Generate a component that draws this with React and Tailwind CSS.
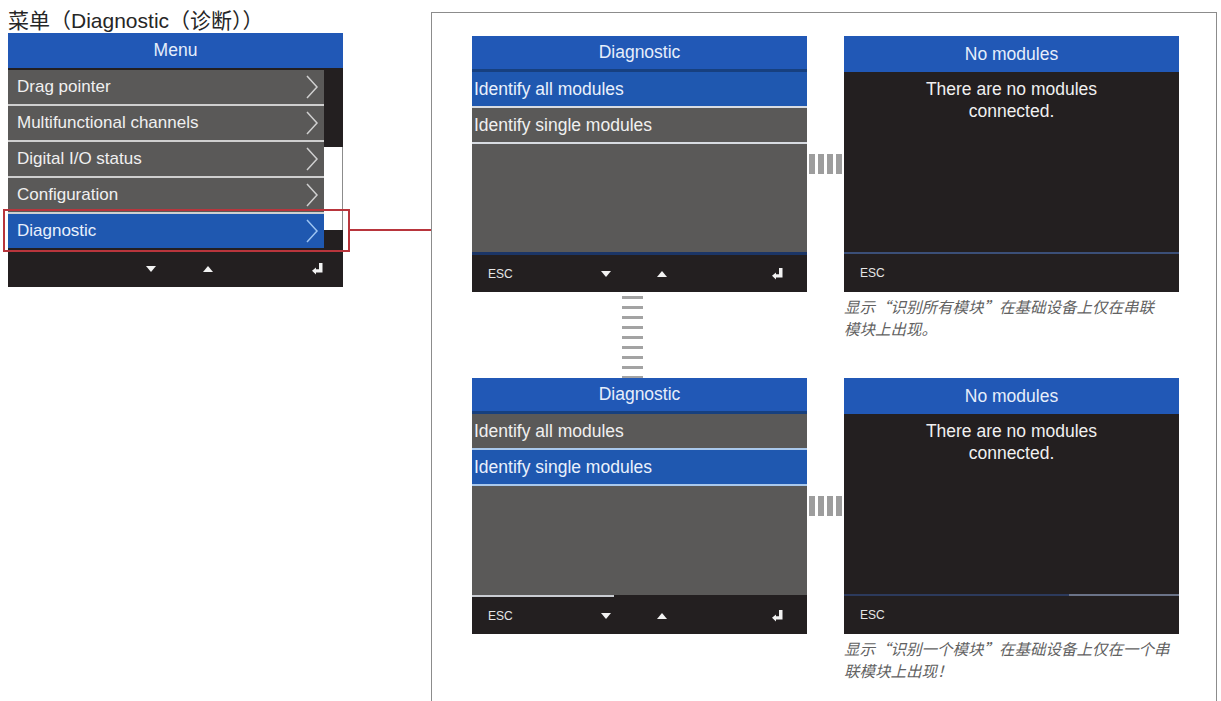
const FONT = "font-['Liberation_Sans','Noto_Sans_CJK_SC',sans-serif]";

const MENU_ITEMS = [
  'Drag pointer',
  'Multifunctional channels',
  'Digital I/O status',
  'Configuration',
  'Diagnostic',
];

const Tri = ({ up }) => (
  <svg width="10" height="6" viewBox="0 0 10 6" className="block">
    <polygon points={up ? '0,6 10,6 5,0' : '0,0 10,0 5,6'} fill="#f2f2f2" />
  </svg>
);

const Enter = () => (
  <svg width="11" height="12" viewBox="0 0 11 12" className="block">
    <path d="M7 0 H10.5 V9.5 H4 V11.5 L0 7.8 L4 4.5 V6.2 H7 Z" fill="#f2f2f2" />
  </svg>
);

const Chevron = ({ color = '#cfcfcf' }) => (
  <svg width="14" height="24" viewBox="0 0 14 24" className="block">
    <polyline points="2,1 12,12 2,23" fill="none" stroke={color} strokeWidth="1.5" />
  </svg>
);

const BottomBar = ({ esc, arrows = true, h = 'h-[37px]', lead = 'w-[113px]', gapUp = 'ml-[46px]', gapEnter = 'ml-[105px]' }) => (
  <div className={`flex items-center bg-[#231f20] pl-4 ${h}`}>
    <span className={`${lead} shrink-0 text-[12px] text-[#e6e6e6]`}>{esc ? 'ESC' : ''}</span>
    {arrows && (
      <>
        <Tri />
        <span className={gapUp}><Tri up /></span>
        <span className={gapEnter}><Enter /></span>
      </>
    )}
  </div>
);

const Header = ({ title, line }) => (
  <div
    className={`flex h-[36px] items-center justify-center bg-[#2158b6] text-[17.5px] text-[#e6eefb] ${
      line ? 'border-b-[3px] border-[#17407f]' : ''
    }`}
  >
    {title}
  </div>
);

const MainMenu = () => (
  <div className="relative w-[335px]">
    <div className="flex h-[35px] items-center justify-center bg-[#2158b6] text-[17.5px] text-[#e6eefb]">
      Menu
    </div>
    <div className="flex bg-[#231f20]">
      <div className="w-[316px] pb-[2px]">
        {MENU_ITEMS.map((label, i) => {
          const active = label === 'Diagnostic';
          return (
            <div
              key={label}
              className={`flex h-[36px] items-center justify-between border-t-2 pl-[9px] pr-[5px] text-[17px] ${
                i === 0 ? 'border-[#231f20]' : 'border-[#cfcfcf]'
              } ${active ? 'bg-[#1f58b0] text-[#e8f0fc]' : 'bg-[#5a5958] text-[#f0f0f0]'}`}
            >
              <span>{label}</span>
              <Chevron color={active ? '#9cc4f2' : '#cfcfcf'} />
            </div>
          );
        })}
      </div>
      <div className="flex w-[19px] flex-col">
        <div className="h-[79px] bg-[#231f20]" />
        <div className="h-[83px] border-r border-[#8c8c8c] bg-white" />
        <div className="flex-1 bg-[#231f20]" />
      </div>
    </div>
    <BottomBar lead="w-[122px]" gapUp="ml-[47px]" gapEnter="ml-[99px]" />

    {/* highlight frame + leader line */}
    <div className="absolute left-[-5px] top-[176px] h-[43px] w-[347px] border-2 border-[#b8353c]" />
    <div className="absolute left-[342px] top-[196px] h-[2px] w-[81px] bg-[#b8353c]" />
  </div>
);

const DiagPanel = ({ selected }) => {
  const rows = ['Identify all modules', 'Identify single modules'];
  const sep = selected === 0 ? 'border-[#d8dce2]' : 'border-[#a9c8ec]';
  return (
    <div className="flex h-[256px] w-[335px] flex-col bg-[#5a5958]">
      <Header title="Diagnostic" line />
      {rows.map((r, i) => (
        <div
          key={r}
          className={`flex h-[36px] items-center border-b-2 pl-[2px] text-[17.5px] ${sep} ${
            i === selected ? 'bg-[#1f58b0] text-[#eaf1fc]' : 'bg-[#5a5958] text-[#f0f0f0]'
          }`}
        >
          {r}
        </div>
      ))}
      <div className="flex-1" />
      {selected === 0 ? (
        <div className="h-[3px] bg-[#1b3566]" />
      ) : (
        <div className="flex h-[2px] bg-[#231f20]">
          <div className="w-[142px] bg-[#c9ccd2]" />
        </div>
      )}
      <BottomBar esc />
    </div>
  );
};

const NoModules = ({ variant }) => (
  <div className="flex h-[256px] w-[335px] flex-col bg-[#231f20]">
    <Header title="No modules" />
    <div className="flex-1 pt-[6px] text-center text-[17.5px] leading-[22px] text-[#f0f0f0]">
      There are no modules
      <br />
      connected.
    </div>
    {variant === 0 ? (
      <div className="h-[2px] bg-[#3b4f78]" />
    ) : (
      <div className="flex h-[2px]">
        <div className="w-[225px] bg-[#2c3a5c]" />
        <div className="flex-1 bg-[#6b7388]" />
      </div>
    )}
    <BottomBar esc arrows={false} h="h-[38px]" />
  </div>
);

const HDashes = () => (
  <div className="flex h-full items-center pl-[2px]">
    <div className="flex h-[20px] gap-[3px]">
      {[0, 1, 2, 3].map((i) => (
        <div key={i} className="w-[6px] bg-[#9d9d9d]" />
      ))}
    </div>
  </div>
);

const VDashes = () => (
  <div className="ml-[150px] flex w-[21px] flex-col gap-[7px] pt-1">
    {[0, 1, 2, 3, 4, 5, 6, 7, 8].map((i) => (
      <div key={i} className="h-[3px] bg-[#a3a3a3]" />
    ))}
  </div>
);

const Caption = ({ children }) => (
  <p className="pt-[3px] text-[15.5px] italic leading-[22px] text-[#626262] font-['Noto_Sans_CJK_SC',sans-serif]">
    {children}
  </p>
);

export default function App() {
  return (
    <div className={`flex h-[701px] overflow-hidden bg-white ${FONT}`}>
      <div className="w-[431px] shrink-0 pl-2 pt-[9px]">
        <div className="h-[24px] text-[21px] leading-[24px] text-[#262626]">菜单（Diagnostic（诊断））</div>
        <MainMenu />
      </div>

      <div className="mt-3 h-[700px] w-[786px] shrink-0 border border-[#8c8c8c] pl-10 pt-[23px]">
        <div className="grid grid-cols-[335px_37px_335px]">
          <DiagPanel selected={0} />
          <HDashes />
          <NoModules variant={0} />

          <div className="h-[86px]">
            <VDashes />
          </div>
          <div />
          <Caption>
            显示“识别所有模块”在基础设备上仅在串联
            <br />
            模块上出现。
          </Caption>

          <DiagPanel selected={1} />
          <HDashes />
          <NoModules variant={1} />

          <div />
          <div />
          <Caption>
            显示“识别一个模块”在基础设备上仅在一个串
            <br />
            联模块上出现！
          </Caption>
        </div>
      </div>
    </div>
  );
}
